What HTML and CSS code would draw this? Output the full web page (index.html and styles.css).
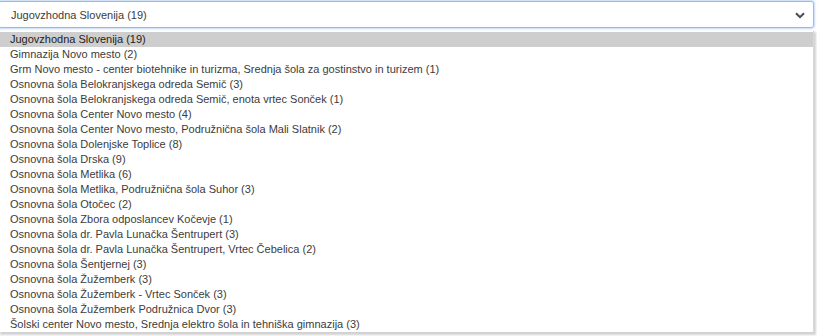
FILE: index.html
```html
<!DOCTYPE html>
<html lang="sl">
<head>
<meta charset="utf-8">
<title>Izbira šole</title>
<link rel="stylesheet" href="styles.css">
</head>
<body>
<div class="picker">
  <div class="select">
    <span class="select-value">Jugovzhodna Slovenija (19)</span>
    <svg class="chevron" width="10" height="7" viewBox="0 0 10 7"><path d="M1 1.2 L5 5.2 L9 1.2" fill="none" stroke="#474a50" stroke-width="2"/></svg>
  </div>
  <ul class="list">
    <li class="item active">Jugovzhodna Slovenija (19)</li>
    <li class="item">Gimnazija Novo mesto (2)</li>
    <li class="item">Grm Novo mesto - center biotehnike in turizma, Srednja šola za gostinstvo in turizem (1)</li>
    <li class="item">Osnovna šola Belokranjskega odreda Semič (3)</li>
    <li class="item">Osnovna šola Belokranjskega odreda Semič, enota vrtec Sonček (1)</li>
    <li class="item">Osnovna šola Center Novo mesto (4)</li>
    <li class="item">Osnovna šola Center Novo mesto, Podružnična šola Mali Slatnik (2)</li>
    <li class="item">Osnovna šola Dolenjske Toplice (8)</li>
    <li class="item">Osnovna šola Drska (9)</li>
    <li class="item">Osnovna šola Metlika (6)</li>
    <li class="item">Osnovna šola Metlika, Podružnična šola Suhor (3)</li>
    <li class="item">Osnovna šola Otočec (2)</li>
    <li class="item">Osnovna šola Zbora odposlancev Kočevje (1)</li>
    <li class="item">Osnovna šola dr. Pavla Lunačka Šentrupert (3)</li>
    <li class="item">Osnovna šola dr. Pavla Lunačka Šentrupert, Vrtec Čebelica (2)</li>
    <li class="item">Osnovna šola Šentjernej (3)</li>
    <li class="item">Osnovna šola Žužemberk (3)</li>
    <li class="item">Osnovna šola Žužemberk - Vrtec Sonček (3)</li>
    <li class="item">Osnovna šola Žužemberk Podružnica Dvor (3)</li>
    <li class="item">Šolski center Novo mesto, Srednja elektro šola in tehniška gimnazija (3)</li>
  </ul>
</div>
</body>
</html>
```

FILE: styles.css
```css
* { box-sizing: border-box; }
html, body { margin: 0; padding: 0; background: #ffffff; }
body {
  font-family: "Liberation Sans", Arial, sans-serif;
  font-size: 11px;
  color: #3c3c3c;
  width: 817px;
  height: 336px;
  overflow: hidden;
}
.picker { display: flex; flex-direction: column; }
.select {
  height: 27px;
  margin: 1px 3px 0 -2px;
  border: 1px solid #8fbcf2;
  border-radius: 3px;
  box-shadow: 0 0 2px 1px rgba(120, 170, 240, 0.45);
  display: flex;
  align-items: center;
  justify-content: space-between;
  padding: 0 8px 0 12px;
}
.chevron { display: block; margin-top: 1px; }
.list {
  list-style: none;
  margin: 3px 3px 0 0;
  padding: 1px 0 0;
  background: #fff;
  box-shadow: 1px 2px 2px 1px rgba(0, 0, 0, 0.18);
  border-right: 1px solid #d8d8d8;
}
.item {
  height: 15px;
  line-height: 15px;
  padding-left: 10px;
  white-space: nowrap;
}
.item.active { background: #cecece; color: #222; }
```
